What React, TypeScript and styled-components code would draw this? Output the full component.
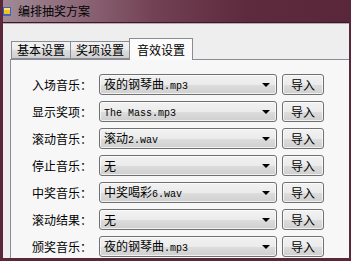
import React from "react";
import styled, { createGlobalStyle } from "styled-components";

const GlobalStyle = createGlobalStyle`
  html, body {
    margin: 0;
    padding: 0;
    background: #5a2639;
  }
  body {
    font-family: "Noto Sans CJK SC", "Noto Sans", sans-serif;
    font-size: 12px;
    color: #000;
  }
`;

const Window = styled.div`
  width: 351px;
  height: 261px;
  box-sizing: border-box;
  display: flex;
  flex-direction: column;
  background: #5a2639;
  border-left: 3px solid #5a2639;
  border-right: 2px solid #5a2639;
  border-bottom: 3px solid #5a2639;
  overflow: hidden;
`;

const TitleBar = styled.div`
  height: 22px;
  flex-shrink: 0;
  margin-left: -3px;
  margin-right: -2px;
  display: flex;
  align-items: center;
  gap: 7px;
  background: linear-gradient(
    90deg,
    #a18b97 0%,
    #8d6878 22%,
    #714052 45%,
    #5e2a3d 70%,
    #5a2639 100%
  );
  border-bottom: 1px solid #3a1826;
`;

const Title = styled.span`
  font-size: 12px;
  line-height: 16px;
  color: #000;
`;

const Client = styled.div`
  flex: 1;
  background: #eeeeee;
  border-top: 1px solid #b9aab1;
  padding: 14px 0 0 7px;
  display: flex;
  flex-direction: column;
  min-height: 0;
`;

const TabStrip = styled.div`
  display: flex;
  align-items: flex-end;
  padding-left: 2px;
  height: 21px;
  position: relative;
  z-index: 1;
`;

const Tab = styled.div<{ $active?: boolean }>`
  box-sizing: border-box;
  height: ${(p) => (p.$active ? 22 : 18)}px;
  padding: 0 ${(p) => (p.$active ? 7 : 5)}px;
  margin-bottom: ${(p) => (p.$active ? -1 : 0)}px;
  border: 1px solid #898c95;
  border-bottom: ${(p) => (p.$active ? "none" : "1px solid #898c95")};
  margin-left: -1px;
  display: flex;
  align-items: center;
  font-size: 12px;
  line-height: 16px;
  background: ${(p) =>
    p.$active
      ? "#fbfbfb"
      : "linear-gradient(180deg, #f2f2f2 0%, #ebebeb 50%, #dddddd 51%, #cfcfcf 100%)"};
`;

const Panel = styled.div`
  flex: 1;
  border-top: 1px solid #898c95;
  border-left: 1px solid #898c95;
  background: #f7f7f7;
  padding: 14px 0 0 21px;
`;

const Form = styled.div`
  display: grid;
  grid-template-columns: 60px 180px 42px;
  column-gap: 5px;
  row-gap: 6px;
  align-items: center;
`;

const Label = styled.span`
  font-size: 12px;
  line-height: 21px;
  white-space: nowrap;
  margin-right: 2px;
`;

const Combo = styled.div`
  box-sizing: border-box;
  height: 21px;
  margin-left: 2px;
  border: 1px solid #707070;
  border-radius: 3px;
  background: linear-gradient(180deg, #f2f2f2 0%, #ebebeb 50%, #dddddd 51%, #cfcfcf 100%);
  box-shadow: inset 0 0 0 1px rgba(255, 255, 255, 0.7);
  display: flex;
  align-items: center;
  padding: 0 6px 0 4px;
`;

const Value = styled.span`
  flex: 1;
  font-size: 12px;
  line-height: 17px;
  white-space: nowrap;
`;

const Latin = styled.span`
  font-family: "Liberation Mono", monospace;
  font-size: 10px;
`;

const Arrow = styled.span`
  width: 0;
  height: 0;
  border-left: 4px solid transparent;
  border-right: 4px solid transparent;
  border-top: 4px solid #000;
  margin-top: 1px;
`;

const Button = styled.div`
  box-sizing: border-box;
  height: 21px;
  width: 42px;
  border: 1px solid #707070;
  border-radius: 3px;
  background: linear-gradient(180deg, #f2f2f2 0%, #ebebeb 50%, #dddddd 51%, #cfcfcf 100%);
  box-shadow: inset 0 0 0 1px rgba(255, 255, 255, 0.7);
  display: flex;
  align-items: center;
  justify-content: center;
  font-size: 12px;
  line-height: 16px;
`;

function AppIcon() {
  return (
    <svg width="11" height="12" viewBox="0 0 11 12">
      <rect x="0" y="5" width="4" height="5" fill="#d23a2a" />
      <rect x="3" y="2" width="8" height="9" fill="#3b62c6" />
      <rect x="4" y="3" width="6" height="6" fill="#f3c21a" />
      <rect x="4" y="3" width="6" height="2" fill="#fbe27a" />
    </svg>
  );
}

function MixedText({ text }: { text: string }) {
  const parts = text.match(/[\x20-\x7e]+|[^\x20-\x7e]+/g) || [];
  return (
    <>
      {parts.map((p, i) =>
        /^[\x20-\x7e]+$/.test(p) ? <Latin key={i}>{p}</Latin> : <span key={i}>{p}</span>
      )}
    </>
  );
}

const rows = [
  { label: "入场音乐：", value: "夜的钢琴曲.mp3" },
  { label: "显示奖项：", value: "The Mass.mp3" },
  { label: "滚动音乐：", value: "滚动2.wav" },
  { label: "停止音乐：", value: "无" },
  { label: "中奖音乐：", value: "中奖喝彩6.wav" },
  { label: "滚动结果：", value: "无" },
  { label: "颁奖音乐：", value: "夜的钢琴曲.mp3" },
];

export default function App() {
  return (
    <>
      <GlobalStyle />
      <Window>
        <TitleBar>
          <AppIcon />
          <Title>编排抽奖方案</Title>
        </TitleBar>
        <Client>
          <TabStrip>
            <Tab>基本设置</Tab>
            <Tab>奖项设置</Tab>
            <Tab $active>音效设置</Tab>
          </TabStrip>
          <Panel>
            <Form>
              {rows.map((r) => (
                <React.Fragment key={r.label}>
                  <Label>{r.label}</Label>
                  <Combo>
                    <Value>
                      <MixedText text={r.value} />
                    </Value>
                    <Arrow />
                  </Combo>
                  <Button>导入</Button>
                </React.Fragment>
              ))}
            </Form>
          </Panel>
        </Client>
      </Window>
    </>
  );
}
